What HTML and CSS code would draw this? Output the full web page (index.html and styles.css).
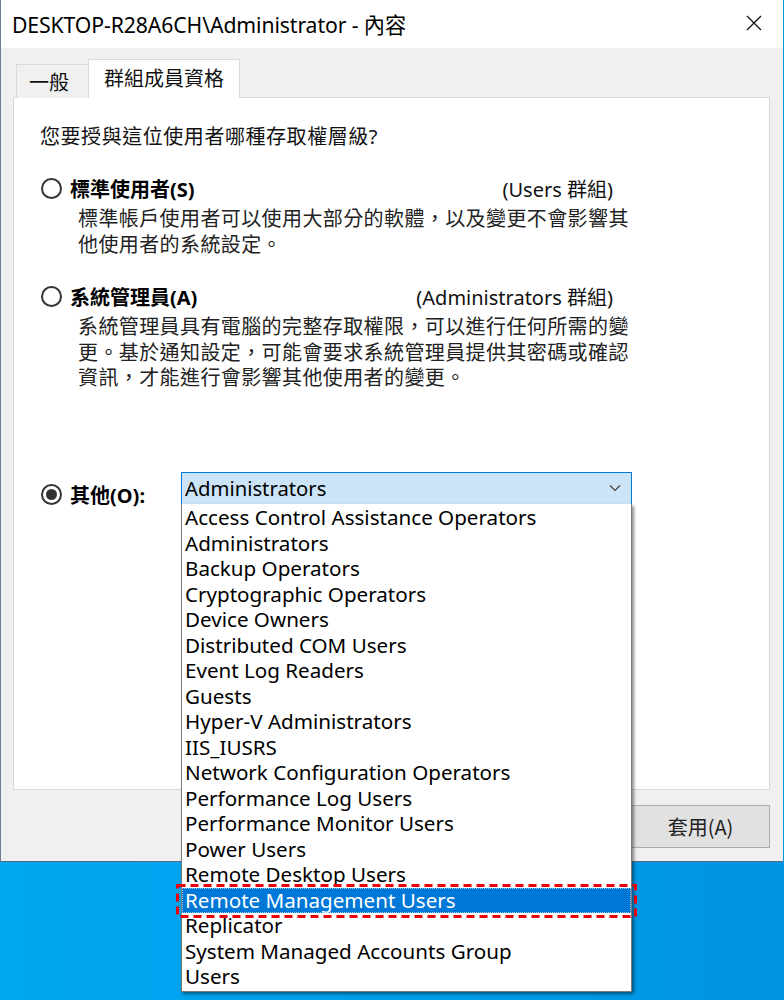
FILE: index.html
```html
<!DOCTYPE html>
<html lang="zh-Hant">
<head>
<meta charset="utf-8">
<title>內容</title>
<link rel="stylesheet" href="styles.css">
</head>
<body>
<div class="window">
  <div class="titlebar">
    <span class="title">DESKTOP-R28A6CH\Administrator - 內容</span>
    <svg class="close" width="16" height="16" viewBox="0 0 16 16"><path d="M1 1 L15 15 M15 1 L1 15" stroke="#111" stroke-width="1.3" fill="none"/></svg>
  </div>
  <div class="client">
    <div class="tabs">
      <div class="tab">一般</div>
      <div class="tab active">群組成員資格</div>
    </div>
    <div class="panel">
      <p class="question">您要授與這位使用者哪種存取權層級?</p>
      <div class="option opt1">
        <div class="opt-head"><span class="radio"></span><span class="opt-label">標準使用者(S)</span><span class="opt-group">(Users 群組)</span></div>
        <p class="desc">標準帳戶使用者可以使用大部分的軟體，以及變更不會影響其<br>他使用者的系統設定。</p>
      </div>
      <div class="option opt2">
        <div class="opt-head"><span class="radio"></span><span class="opt-label">系統管理員(A)</span><span class="opt-group">(Administrators 群組)</span></div>
        <p class="desc">系統管理員具有電腦的完整存取權限，可以進行任何所需的變<br>更。基於通知設定，可能會要求系統管理員提供其密碼或確認<br>資訊，才能進行會影響其他使用者的變更。</p>
      </div>
      <div class="other-row">
        <div class="other-left"><span class="radio checked"></span><span class="opt-label">其他(O):</span></div>
        <div class="combo">
          <span>Administrators</span>
          <svg class="chev" width="12" height="8" viewBox="0 0 12 8"><path d="M1 1.5 L6 6.5 L11 1.5" stroke="#444" stroke-width="1.2" fill="none"/></svg>
        </div>
      </div>
    </div>
    <div class="buttons">
      <div class="btn">套用(A)</div>
    </div>
  </div>
</div>
<ul class="dropdown">
  <li>Access Control Assistance Operators</li>
  <li>Administrators</li>
  <li>Backup Operators</li>
  <li>Cryptographic Operators</li>
  <li>Device Owners</li>
  <li>Distributed COM Users</li>
  <li>Event Log Readers</li>
  <li>Guests</li>
  <li>Hyper-V Administrators</li>
  <li>IIS_IUSRS</li>
  <li>Network Configuration Operators</li>
  <li>Performance Log Users</li>
  <li>Performance Monitor Users</li>
  <li>Power Users</li>
  <li>Remote Desktop Users</li>
  <li class="selected">Remote Management Users</li>
  <li>Replicator</li>
  <li>System Managed Accounts Group</li>
  <li>Users</li>
</ul>
<svg class="annot" width="461" height="34" viewBox="0 0 461 34"><rect x="1.5" y="1.5" width="458" height="31" fill="none" stroke="#e8000b" stroke-width="3" stroke-dasharray="8 5"/></svg>
</body>
</html>
```
FILE: styles.css
```css
html, body {
  margin: 0;
  padding: 0;
}
body {
  width: 784px;
  height: 1000px;
  position: relative;
  overflow: hidden;
  background: linear-gradient(90deg, #00a6f0 0%, #009fec 50%, #0093e2 100%);
  font-family: "Noto Sans", "Noto Sans CJK TC", sans-serif;
  color: #000;
}
.window {
  width: 783px;
  height: 862px;
  box-sizing: border-box;
  border-left: 1px solid #6d7f90;
  border-bottom: 1px solid #4f6b84;
  background: #f0f0f0;
  display: flex;
  flex-direction: column;
}
.titlebar {
  height: 48px;
  flex: none;
  background: #fff;
  display: flex;
  align-items: center;
  padding: 0 21px 0 11px;
}
.title {
  font-size: 21.2px;
  flex: 1;
  white-space: nowrap;
  padding-bottom: 2px;
  letter-spacing: -0.1px;
}
.close {
  margin-bottom: 2px;
}
.client {
  flex: 1;
  display: flex;
  flex-direction: column;
  padding: 12px 13px 0 12px;
}
.tabs {
  display: flex;
  align-items: flex-end;
  height: 38px;
  padding-left: 3px;
  position: relative;
  z-index: 1;
  margin-bottom: -1px;
}
.tab {
  font-family: "Noto Sans CJK TC", sans-serif;
  font-size: 20px;
  height: 34px;
  box-sizing: border-box;
  border: 1px solid #d9d9d9;
  border-bottom: none;
  background: #f0f0f0;
  padding: 0 19px 0 12px;
  display: flex;
  align-items: center;
  color: #111;
}
.tab.active {
  height: 39px;
  background: #fff;
  padding: 3px 15px 0 15px;
  margin-left: -1px;
  align-items: flex-start;
}
.panel {
  height: 693px;
  flex: none;
  box-sizing: border-box;
  background: #fff;
  border: 1px solid #d9d9d9;
  padding: 26px 0 0 26px;
  display: flex;
  flex-direction: column;
  font-family: "Noto Sans", "Noto Sans CJK TC", sans-serif;
  font-size: 20px;
}
.question {
  margin: 0;
  line-height: 26px;
  height: 26px;
  color: #111;
  letter-spacing: 0.55px;
}
.option {
  width: 573px;
}
.opt1 {
  margin-top: 25px;
}
.opt2 {
  margin-top: 26px;
}
.opt-head {
  display: flex;
  align-items: center;
  height: 26px;
}
.radio {
  width: 21px;
  height: 21px;
  box-sizing: border-box;
  border: 2px solid #333;
  border-radius: 50%;
  flex: none;
  margin-left: 1px;
  margin-right: 8px;
  display: flex;
  align-items: center;
  justify-content: center;
}
.radio.checked::after {
  content: "";
  width: 11px;
  height: 11px;
  border-radius: 50%;
  background: #333;
}
.opt-label {
  font-weight: 700;
  white-space: nowrap;
}
.opt-group {
  margin-left: auto;
  white-space: nowrap;
  color: #111;
}
.desc {
  margin: 5px 0 0 38px;
  line-height: 25.5px;
  white-space: nowrap;
  color: #222;
  letter-spacing: 0.4px;
}
.other-row {
  margin-top: 81px;
  display: flex;
  align-items: flex-start;
}
.other-left {
  display: flex;
  align-items: center;
  height: 26px;
  margin-top: 10px;
  width: 141px;
}
.combo {
  width: 451px;
  height: 33px;
  box-sizing: border-box;
  background: #cce4f7;
  border: 1px solid #0078d7;
  display: flex;
  align-items: center;
  padding: 0 8px 0 3px;
  font-size: 20.3px;
}
.combo span {
  flex: 1;
  padding-bottom: 1px;
}
.chev {
  margin-right: 2px;
}
.buttons {
  display: flex;
  justify-content: flex-end;
  margin-top: 15px;
}
.btn {
  width: 139px;
  height: 43px;
  box-sizing: border-box;
  background: #e1e1e1;
  border: 1px solid #adadad;
  display: flex;
  align-items: center;
  justify-content: center;
  font-family: "Noto Sans CJK TC", sans-serif;
  font-size: 20px;
  color: #222;
}
.dropdown {
  position: absolute;
  left: 181px;
  top: 504px;
  width: 451px;
  margin: 0;
  padding: 1px 0;
  list-style: none;
  box-sizing: border-box;
  background: #fff;
  border: 1px solid #7a7a7a;
  border-top: none;
  box-shadow: 2px 2px 3px rgba(0, 0, 0, 0.45);
  font-family: "Noto Sans", sans-serif;
  font-size: 20.6px;
}
.dropdown li {
  height: 25.5px;
  line-height: 25px;
  padding-left: 3px;
  white-space: nowrap;
  color: #000;
}
.dropdown li.selected {
  background: #0078d7;
  color: #fff;
  outline: 1px dotted #9cc8f0;
  outline-offset: -1px;
}
.annot {
  position: absolute;
  left: 176px;
  top: 884px;
}
```
